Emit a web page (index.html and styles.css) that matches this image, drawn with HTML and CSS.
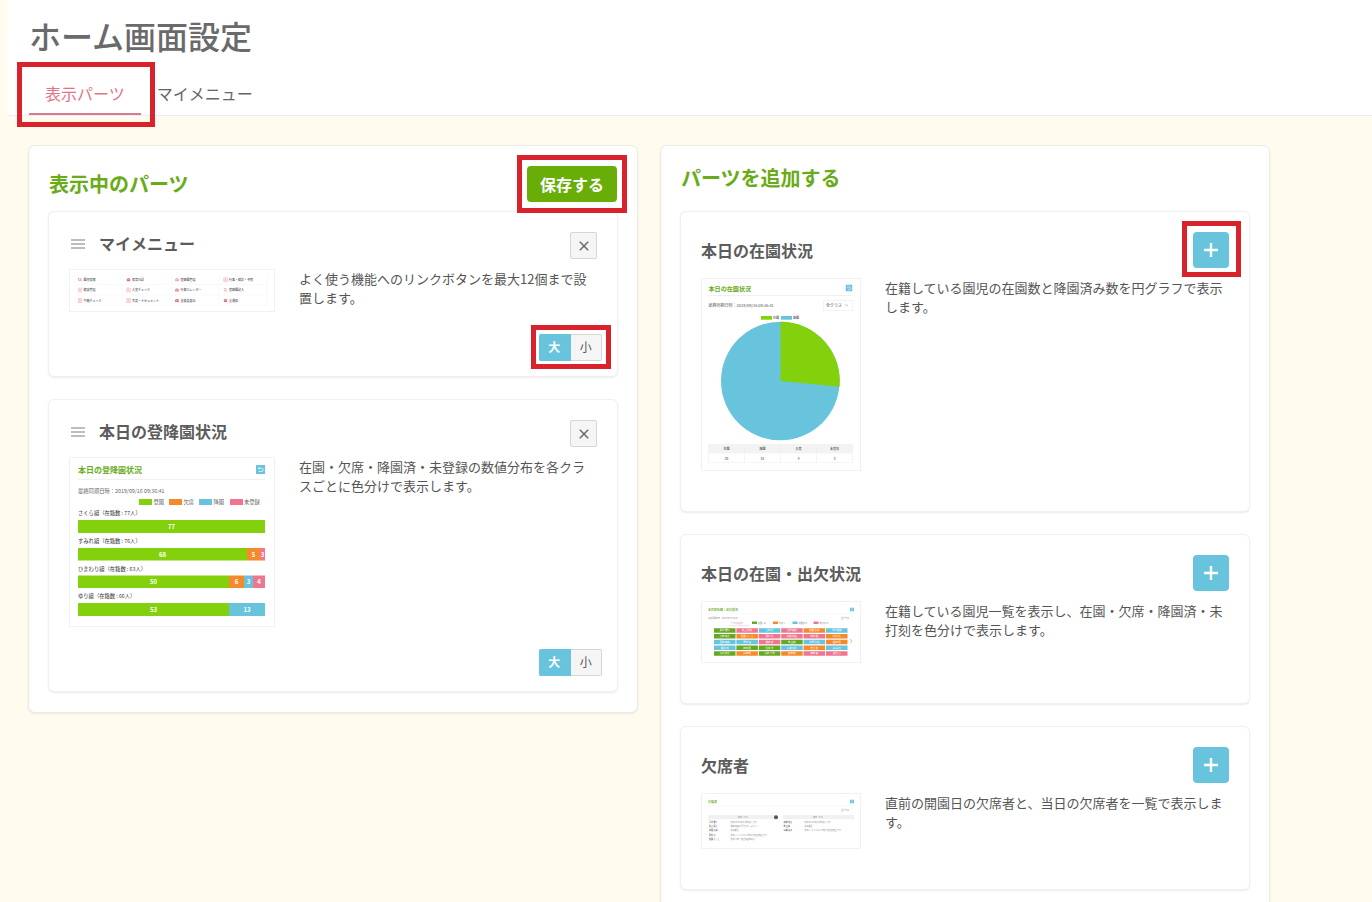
FILE: index.html
```html
<!DOCTYPE html>
<html lang="ja">
<head>
<meta charset="utf-8">
<meta name="viewport" content="width=device-width, initial-scale=1">
<title>ホーム画面設定</title>
<link rel="stylesheet" href="styles.css">
</head>
<body>
<svg class="sprite" aria-hidden="true">
  <symbol id="grip" viewBox="0 0 14 12"><path d="M0 2h14M0 6h14M0 10h14" stroke="#bdbdbd" stroke-width="2"/></symbol>
  <symbol id="cross" viewBox="0 0 10 10"><path d="M.8.8l8.4 8.4M9.2.8L.8 9.2" stroke="#666" stroke-width="1.4"/></symbol>
  <symbol id="plus" viewBox="0 0 16 16"><path d="M8 1v14M1 8h14" stroke="#fff" stroke-width="2.4"/></symbol>
  <symbol id="reload" viewBox="0 0 9 9"><rect width="9" height="9" fill="#68c3dd"/><path d="M2.5 3.2h3a1.6 1.6 0 0 1 0 3.3h-2.600M3.700 2l-1.300 1.200 1.300 1.200" fill="none" stroke="#fff" stroke-width=".7"/></symbol>
  <symbol id="doc" viewBox="0 0 4 4"><path d="M.6.3h2.800v3.400H.6zM1.300 1.300h1.400M1.300 2h1.400M1.300 2.700h1.400" fill="none" stroke="#e9899d" stroke-width=".35"/></symbol>
  <symbol id="lens" viewBox="0 0 4 4"><circle cx="1.600" cy="1.600" r="1.200" fill="none" stroke="#df5872" stroke-width=".6"/><path d="M2.500 2.500l1.300 1.300" stroke="#df5872" stroke-width=".7"/></symbol>
  <symbol id="box" viewBox="0 0 4 4"><path d="M.2 1.300L2 .2l1.800 1.100v2.300H.2z" fill="#e0627b"/><path d="M1 2h2" stroke="#fff" stroke-width=".5"/></symbol>
</svg>
<div class="page">
  <header class="header">
    <h1 class="header-title">ホーム画面設定</h1>
    <nav class="tabs">
      <a class="tab tab-active marked marked-tab" href="#parts" aria-current="page">表示パーツ</a>
      <a class="tab" href="#menu">マイメニュー</a>
    </nav>
  </header>

  <main class="panels">
    <section class="panel">
      <div class="panel-head">
        <h2 class="panel-title">表示中のパーツ</h2>
        <button class="save marked marked-save" type="button">保存する</button>
      </div>
      <div class="cards">
        <article class="card card-shown">
          <div class="card-head">
            <button class="grip" type="button" aria-label="並べ替え"><svg width="14" height="12"><use href="#grip"/></svg></button>
            <h3 class="card-title">マイメニュー</h3>
            <button class="close" type="button" aria-label="削除"><svg width="10" height="10"><use href="#cross"/></svg></button>
          </div>
          <div class="card-body">
            <svg class="thumb thumb-wide" viewBox="0 0 206 43">
              <path d="M8 15.500h190M8 26h190M8 36h190M54 6v30M102 6v30M150 6v30M198 6v30" stroke="#f6f6f6" stroke-width=".7"/>
              <use href="#lens" x="9" y="8.700" width="4" height="4"/><use href="#box" x="57.500" y="8.700" width="4" height="4"/><use href="#box" x="106" y="8.700" width="4" height="4" opacity=".6"/><use href="#doc" x="154" y="8.200" width="5" height="5"/>
              <use href="#doc" x="8.500" y="18.500" width="5" height="5"/><use href="#doc" x="57" y="18.500" width="5" height="5"/><use href="#box" x="106" y="19" width="4" height="4" opacity=".8"/><use href="#lens" x="154.500" y="19" width="4" height="4" opacity=".7"/>
              <use href="#doc" x="8.500" y="29" width="5" height="5"/><use href="#doc" x="57" y="29" width="5" height="5"/><use href="#box" x="106" y="29.500" width="4" height="4"/><use href="#box" x="154.500" y="29.500" width="4" height="4"/>
              <g class="t-tiny">
                <text x="14.500" y="12">園児情報</text><text x="63" y="12">保育日誌</text><text x="111.500" y="12">登降園管理</text><text x="160" y="12">行事・健診・予防</text>
                <text x="14.500" y="22.300">健康管理</text><text x="63" y="22.300">入室チェック</text><text x="111.500" y="22.300">行事カレンダー</text><text x="160" y="22.300">登降園記入</text>
                <text x="14.500" y="32.700">午睡チェック</text><text x="63" y="32.700">写真・ドキュメント</text><text x="111.500" y="32.700">支援委員会</text><text x="160" y="32.700">全通知</text>
              </g>
            </svg>
            <p class="desc">よく使う機能へのリンクボタンを最大12個まで設置します。</p>
          </div>
          <div class="sizes marked marked-sizes" role="radiogroup" aria-label="サイズ">
            <label class="size"><input type="radio" name="size-menu" checked>大</label>
            <label class="size"><input type="radio" name="size-menu">小</label>
          </div>
        </article>

        <article class="card card-shown">
          <div class="card-head">
            <button class="grip" type="button" aria-label="並べ替え"><svg width="14" height="12"><use href="#grip"/></svg></button>
            <h3 class="card-title">本日の登降園状況</h3>
            <button class="close" type="button" aria-label="削除"><svg width="10" height="10"><use href="#cross"/></svg></button>
          </div>
          <div class="card-body">
            <svg class="thumb thumb-wide" viewBox="0 0 206 170">
              <text class="t-head" x="9" y="15.500" font-size="8">本日の登降園状況</text>
              <use href="#reload" x="187" y="8" width="9" height="9"/>
              <path d="M9 22.500h187" stroke="#f0f0f0"/>
              <g class="t-body">
                <text x="9" y="35.500">最終同期日時：2019/09/16 09:36:41</text>
                <text x="84.500" y="47">登園</text><text x="114.500" y="47">欠席</text><text x="144.500" y="47">降園</text><text x="175" y="47">未登録</text>
              </g>
              <g class="t-body t-dark">
                <text x="9" y="58">さくら組（在籍数 : 77人）</text><text x="9" y="86">すみれ組（在籍数 : 76人）</text><text x="9" y="113.500">ひまわり組（在籍数 : 63人）</text><text x="9" y="141">ゆり組（在籍数 : 66人）</text>
              </g>
              <path class="f-green" d="M70 42h13v6H70zM9 63h187v13H9zM9 91h169v12.500H9zM9 118.500h151v12.500H9zM9 146h151v13H9z"/>
              <path class="f-orange" d="M100 42h13v6h-13zM178 91h13v12.500h-13zM160 118.500h15v12.500h-15z"/>
              <path class="f-blue" d="M130 42h13v6h-13zM175 118.500h9v12.500h-9zM160 146h36v13h-36z"/>
              <path class="f-pink" d="M161 42h13v6h-13zM191 91h5v12.500h-5zM184 118.500h12v12.500h-12z"/>
              <g class="t-bar">
                <text x="102.500" y="71.700">77</text><text x="93.500" y="99.500">68</text><text x="184.500" y="99.500">5</text><text x="193.500" y="99.500">3</text>
                <text x="84.500" y="127">50</text><text x="167.500" y="127">6</text><text x="179.500" y="127">3</text><text x="190" y="127">4</text>
                <text x="84.500" y="154.700">53</text><text x="178" y="154.700">13</text>
              </g>
            </svg>
            <p class="desc">在園・欠席・降園済・未登録の数値分布を各クラスごとに色分けで表示します。</p>
          </div>
          <div class="sizes" role="radiogroup" aria-label="サイズ">
            <label class="size"><input type="radio" name="size-status" checked>大</label>
            <label class="size"><input type="radio" name="size-status">小</label>
          </div>
        </article>
      </div>
    </section>

    <section class="panel">
      <div class="panel-head">
        <h2 class="panel-title">パーツを追加する</h2>
      </div>
      <div class="cards">
        <article class="card card-extra">
          <div class="card-head card-head-add">
            <h3 class="card-title">本日の在園状況</h3>
            <button class="add marked marked-add" type="button" aria-label="追加"><svg width="16" height="16"><use href="#plus"/></svg></button>
          </div>
          <div class="card-body">
            <svg class="thumb thumb-narrow" viewBox="0 0 160 193">
              <text class="t-head" x="7.500" y="12.500" font-size="6.100">本日の在園状況</text>
              <use href="#reload" x="144.500" y="6.500" width="7" height="7"/>
              <path d="M7.500 17.500h144" stroke="#f0f0f0"/>
              <rect x="122.500" y="22.500" width="29" height="10" fill="none" stroke="#f0f0f0" stroke-width=".7"/>
              <path d="M144 26.500l1.500 1.300 1.500-1.300" fill="none" stroke="#888" stroke-width=".5"/>
              <g class="t-pie">
                <text x="7.500" y="29">最終同期日時：2019/09/16 09:36:41</text><text x="125" y="29">全クラス</text>
              </g>
              <path class="f-green" d="M60 38h11v3.700H60z"/><path class="f-blue" d="M80 38h11v3.700H80z"/>
              <g class="t-tiny"><text x="72" y="41">在園</text><text x="92" y="41">降園</text></g>
              <circle class="f-blue" cx="79.300" cy="103" r="59.300"/>
              <path class="f-green" d="M79.500 103V43.700a59.300 59.300 0 0 1 59 65z"/>
              <path d="M7.500 166h144v9.500h-144z" fill="#f3f3f3"/>
              <path d="M7.500 184.500h144M7.500 166v18.500M43.500 166v18.500M79.500 166v18.500M115.500 166v18.500M151.500 166v18.500" stroke="#eee" stroke-width=".6"/>
              <g class="t-tiny t-mid">
                <text x="25.500" y="172.300">在園</text><text x="61.500" y="172.300">降園</text><text x="97.500" y="172.300">欠席</text><text x="133.500" y="172.300">未登録</text>
                <text x="25.500" y="181.500">30</text><text x="61.500" y="181.500">82</text><text x="97.500" y="181.500">4</text><text x="133.500" y="181.500">3</text>
              </g>
            </svg>
            <p class="desc">在籍している園児の在園数と降園済み数を円グラフで表示します。</p>
          </div>
        </article>

        <article class="card card-extra">
          <div class="card-head card-head-add">
            <h3 class="card-title">本日の在園・出欠状況</h3>
            <button class="add" type="button" aria-label="追加"><svg width="16" height="16"><use href="#plus"/></svg></button>
          </div>
          <div class="card-body">
            <svg class="thumb thumb-narrow" viewBox="0 0 160 62">
              <text class="t-head" x="7" y="9.500" font-size="3">本日の在園・出欠状況</text>
              <use href="#reload" x="149" y="6.500" width="4" height="4"/>
              <path d="M7 13h146" stroke="#f3f3f3" stroke-width=".6"/>
              <g class="t-micro">
                <text x="7" y="18">最終同期日時：2019/09/16 09:36</text><text x="140" y="18">全クラス</text>
                <text x="57" y="23">在園 : 10</text><text x="78" y="23">欠席 5</text><text x="97.500" y="23">降園済 10</text><text x="118.500" y="23">未打刻 10</text><text class="t-pink" x="30" y="23">クラス別表示</text>
              </g>
              <path d="M28 24.500h20" stroke="#f6c5cf" stroke-width=".5"/>
              <path d="M149 38l2 2-2 2" fill="none" stroke="#f0954a" stroke-width=".6"/>
              <path class="f-leaf" d="M51 20.500h5v2.500h-5z"/><path class="f-orange" d="M72 20.500h5v2.500h-5z"/><path class="f-blue" d="M91.500 20.500h5v2.500h-5z"/><path class="f-pink" d="M112.500 20.500h5v2.500h-5z"/>
              <g fill="none" stroke-width="4.500">
                <path class="s-leaf" d="M13 29.500h21.500M13 35.300h21.500M80.200 41h21.500M35.400 46.700h21.500M57.800 46.700h21.500M13 52.400h21.500M57.800 52.400h21.500"/>
                <path class="s-pink" d="M35.400 29.500h21.500M80.200 29.500h21.500M57.800 35.300h21.500M80.200 35.300h21.500M102.600 35.300h21.500M57.800 41h21.500M102.600 52.400h21.500M125 52.400h21.500"/>
                <path class="s-blue" d="M57.800 29.500h21.500M125 29.500h21.500M13 41h21.500M35.400 41h21.500M102.600 41h21.500M13 46.700h21.500M80.200 46.700h21.500M125 46.700h21.500"/>
                <path class="s-orange" d="M102.600 29.500h21.500M35.400 35.300h21.500M125 35.300h21.500M125 41h21.500M102.600 46.700h21.500M35.400 52.400h21.500M80.200 52.400h21.500"/>
              </g>
              <g class="t-cell">
                <text y="30.300"><tspan x="23.700">青木 優斗</tspan><tspan x="46.100">井上 陽菜</tspan><tspan x="68.500">上田 蓮</tspan><tspan x="90.900">大野 結衣</tspan><tspan x="113.300">加藤 大和</tspan><tspan x="135.700">木村 美咲</tspan></text>
                <text y="36.100"><tspan x="23.700">小林 颯太</tspan><tspan x="46.100">佐藤 さくら</tspan><tspan x="68.500">鈴木 凛</tspan><tspan x="90.900">高橋 悠真</tspan><tspan x="113.300">田中 葵</tspan><tspan x="135.700">中村 陸</tspan></text>
                <text y="41.800"><tspan x="23.700">西田 結菜</tspan><tspan x="46.100">野村 湊</tspan><tspan x="68.500">橋本 杏</tspan><tspan x="90.900">林 直樹</tspan><tspan x="113.300">平野 芽衣</tspan><tspan x="135.700">福田 翔</tspan></text>
                <text y="47.500"><tspan x="23.700">藤井 花</tspan><tspan x="46.100">前田 蒼</tspan><tspan x="68.500">松本 光</tspan><tspan x="90.900">三浦 莉子</tspan><tspan x="113.300">村上 新</tspan><tspan x="135.700">森 彩花</tspan></text>
                <text y="53.200"><tspan x="23.700">山口 健太</tspan><tspan x="46.100">山田 楓</tspan><tspan x="68.500">山本 千尋</tspan><tspan x="90.900">吉田 樹</tspan><tspan x="113.300">和田 奏</tspan><tspan x="135.700">渡辺 心</tspan></text>
              </g>
            </svg>
            <p class="desc">在籍している園児一覧を表示し、在園・欠席・降園済・未打刻を色分けで表示します。</p>
          </div>
        </article>

        <article class="card card-extra">
          <div class="card-head card-head-add">
            <h3 class="card-title">欠席者</h3>
            <button class="add" type="button" aria-label="追加"><svg width="16" height="16"><use href="#plus"/></svg></button>
          </div>
          <div class="card-body">
            <svg class="thumb thumb-narrow" viewBox="0 0 160 56">
              <text class="t-head" x="7" y="9.500" font-size="3">欠席者</text>
              <use href="#reload" x="149" y="6.500" width="4" height="4"/>
              <path d="M7 13h146" stroke="#f3f3f3" stroke-width=".6"/>
              <path d="M7 22h70v4.300H7zM82 22h71v4.300H82z" fill="#f1f1f1"/>
              <circle cx="75" cy="24.300" r="2" fill="#555"/>
              <g class="t-micro">
                <text x="140" y="18">全クラス</text><text x="37" y="25">前日（7/2）</text><text x="112" y="25">本日（7/3）</text>
                <text x="29.500" y="29.700">発熱 38.0℃のため欠席します</text><text x="29.500" y="34">通院 病院に行きます。よろしく</text><text x="29.500" y="38.300">家庭都合</text><text x="29.500" y="42.700">発熱 インフルエンザのため出席停止です</text><text x="29.500" y="47">発熱 下痢・嘔吐の症状あり</text>
                <text x="103.500" y="29.700">発熱 38.0℃のため欠席します</text><text x="103.500" y="34">家庭都合</text><text x="103.500" y="38.300">発熱 インフルエンザのため出席停止です</text>
              </g>
              <g class="t-micro t-dark">
                <text x="8" y="29.700">青木 優斗</text><text x="8" y="34">井上 陽菜</text><text x="8" y="38.300">加藤 大和</text><text x="8" y="42.700">鈴木 凛</text><text x="8" y="47">佐藤 さくら</text>
                <text x="82.500" y="29.700">高橋 悠真</text><text x="82.500" y="34">林 直樹</text><text x="82.500" y="38.300">三浦 莉子</text>
              </g>
            </svg>
            <p class="desc">直前の開園日の欠席者と、当日の欠席者を一覧で表示します。</p>
          </div>
        </article>
      </div>
    </section>
  </main>
</div>
</body>
</html>
```
FILE: styles.css
```css
* { box-sizing: border-box; }

body {
  margin: 0;
  background: #fffbee;
  color: #555;
  font-family: "Noto Sans CJK JP", "Liberation Sans", sans-serif;
  font-size: 13px;
  line-height: 19px;
}

h1, h2, h3, p { margin: 0; }

button {
  padding: 0;
  border: 0;
  font: inherit;
  color: inherit;
  cursor: pointer;
}

.sprite { display: none; }

.page {
  height: 100vh;
  overflow: auto;
  scrollbar-width: none;
  padding-left: 7px;
}

.header {
  padding: 11px 21px 0;
  background: #fff;
  border-bottom: 1px solid #ececec;
}

.header-title {
  font-size: 32px;
  font-weight: 500;
  line-height: 48px;
  color: #6a6a6a;
  padding-left: 1px;
}

.tabs {
  display: flex;
  margin-top: 14px;
  padding-left: 1px;
}

.tab {
  padding: 8px 16px 7px;
  border-bottom: 2px solid transparent;
  font-size: 16px;
  line-height: 25px;
  color: #666;
  text-decoration: none;
}

.tab-active {
  color: #e4738a;
  border-color: #d97b8e;
}

/* Red guide frames around the controls being explained */
.marked { position: relative; }

.marked::after {
  content: "";
  position: absolute;
  border: 5px solid #d8222c;
  pointer-events: none;
  z-index: 1;
}

.marked-tab::after { inset: -11px -14px -14px -12px; }
.marked-save::after { inset: -11px -10px; }
.marked-sizes::after { inset: -9px -9px -8px -8px; }
.marked-add::after { inset: -11px -12px -9px -11px; }

.panels {
  display: grid;
  grid-template-columns: 1fr 1fr;
  align-items: start;
  gap: 22px;
  padding: 29px 102px 29px 21px;
}

.panel {
  padding: 20px 19px;
  background: #fff;
  border: 1px solid #eeebe2;
  border-radius: 7px;
  box-shadow: 0 1px 2px rgba(0, 0, 0, .08);
}

.panel-head {
  display: flex;
  justify-content: space-between;
  align-items: flex-start;
  min-height: 45px;
  padding: 0 1px;
}

.panel-title {
  font-size: 20px;
  line-height: 24px;
  color: #6aab1a;
}

.panel-title:not(:only-child) { line-height: 36px; }

.save {
  width: 90px;
  height: 36px;
  border-radius: 4px;
  background: #69ad08;
  color: #fff;
  font-size: 16px;
  font-weight: 700;
}

.cards {
  display: grid;
  gap: 22px;
}

.card {
  padding: 20px;
  background: #fff;
  border: 1px solid #f0f0f0;
  border-radius: 6px;
  box-shadow: 0 1px 2px rgba(0, 0, 0, .08);
}

.card-shown { padding-bottom: 15px; }
.card-extra { padding-bottom: 40px; }

.card-head {
  display: flex;
  align-items: flex-start;
  margin-bottom: 10px;
}

.card-head-add { align-items: center; }

.card-title {
  flex: 1;
  font-size: 16px;
  line-height: 22px;
  color: #5c5c5c;
}

.card-head-add .card-title { line-height: 24px; }

.grip {
  display: flex;
  align-items: center;
  width: 30px;
  height: 24px;
  padding-left: 2px;
  background: none;
}

.close,
.add {
  display: grid;
  place-items: center;
}

.close {
  width: 27px;
  height: 27px;
  background: #f5f5f5;
  border: 1px solid #d6d6d6;
  border-radius: 2px;
}

.add {
  width: 36px;
  height: 36px;
  background: #68c3dd;
  border-radius: 4px;
}

.card-body {
  display: flex;
  align-items: flex-start;
  gap: 24px;
}

.desc { flex: 1; }

.thumb {
  flex: none;
  outline: 1px solid #f1f1f1;
  outline-offset: -1px;
}

.thumb-wide { width: 206px; }
.thumb-narrow { width: 160px; }

.sizes {
  display: flex;
  width: 63px;
  height: 27px;
  margin: 22px -5px 0 auto;
}

.size {
  position: relative;
  flex: 1;
  border: 1px solid #d6d6d6;
  border-left: 0;
  border-radius: 0 2px 2px 0;
  background: #f5f5f5;
  font-size: 12px;
  line-height: 24px;
  text-align: center;
  cursor: pointer;
}

.size:first-child { border-radius: 2px 0 0 2px; }

.size:has(:checked) {
  background: #68c3dd;
  border-color: #68c3dd;
  color: #fff;
  font-weight: 700;
}

.size input {
  position: absolute;
  inset: 0;
  margin: 0;
  opacity: 0;
}

/* Preview drawings */
.t-head { font-weight: 700; fill: #6aab1a; }
.t-body { font-size: 5.3px; fill: #666; }
.t-pie { font-size: 4px; fill: #555; }
.t-tiny { font-size: 3px; fill: #555; font-weight: 500; }
.t-micro { font-size: 2px; fill: #888; }
.t-dark { fill: #333; }
.t-pink { fill: #e9899d; }
.t-mid { text-anchor: middle; }
.t-bar { font-size: 6px; font-weight: 700; fill: #fff; text-anchor: middle; }
.t-cell { font-size: 2.4px; fill: #fff; text-anchor: middle; }
.f-green { fill: #82d10c; }
.f-leaf { fill: #66a823; }
.f-orange { fill: #f58a2b; }
.f-blue { fill: #68c3dd; }
.f-pink { fill: #f0768f; }
.s-leaf { stroke: #66a823; }
.s-orange { stroke: #f58a2b; }
.s-blue { stroke: #68c3dd; }
.s-pink { stroke: #f0768f; }
```
